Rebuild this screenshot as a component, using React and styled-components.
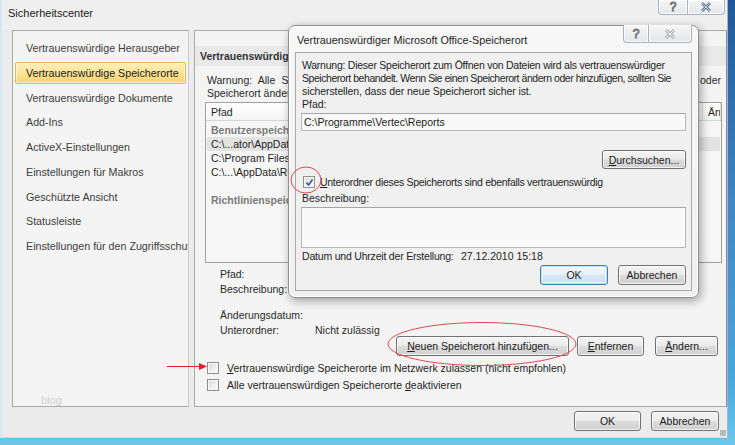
import React from "react";
import styled, { createGlobalStyle, css } from "styled-components";

const FONT = `"Liberation Sans", Arial, sans-serif`;

const Global = createGlobalStyle`
  html, body {
    margin: 0;
    padding: 0;
    background: #f0f0f0;
    font-family: ${FONT};
    font-size: 10.5px;
    color: #1e1e1e;
  }
  * { box-sizing: border-box; }
`;

const Frame = styled.div`
  position: relative;
  width: 735px;
  height: 445px;
  overflow: hidden;
  display: flex;
  padding: 0 7px 7px 0;
  background: linear-gradient(180deg, #1f5796 0%, #3f86c4 45%, #4aa6dc 85%, #6cc6ec 100%);
`;

const Window = styled.div`
  flex: 1;
  min-width: 0;
  overflow: hidden;
  display: flex;
  flex-direction: column;
  background: #ececec;
  border-left: 2px solid #d4e9f3;
  border-right: 1px solid #9fb6cc;
  border-bottom: 1px solid #c8dbe6;
`;

const TitleBar = styled.div`
  height: 30px;
  display: flex;
  justify-content: space-between;
  align-items: flex-start;
  padding-left: 6px;
  background: #efefef;
`;

const TitleText = styled.div`
  font-size: 11px;
  line-height: 26px;
  color: #1a1a1a;
`;

const Caption = styled.div`
  display: flex;
  margin-right: 2px;
`;

const CaptionButton = styled.div`
  width: ${(p) => p.$w}px;
  height: ${(p) => p.$h}px;
  display: flex;
  align-items: center;
  justify-content: center;
  border: 1px solid #a9b2bd;
  border-top: none;
  background: linear-gradient(#f6f6f6, #e4e6e9);
  box-shadow: inset 0 0 0 1px rgba(255, 255, 255, 0.8);
  color: #6f7f92;
  font-size: 11px;
  font-weight: bold;
  ${(p) => p.$first && css`border-bottom-left-radius: 4px;`}
  ${(p) => p.$last && css`border-bottom-right-radius: 4px; border-left: none;`}
`;

const Body = styled.div`
  height: 377px;
  display: flex;
  gap: 5px;
  padding-left: 10px;
  min-width: 0;
`;

const Nav = styled.div`
  width: 177px;
  flex: none;
  border: 1px solid #a8a8a8;
  border-right-color: #c9c9c9;
  background: #f4f4f4;
  padding: 6px 2px 0 2px;
  overflow: hidden;
`;

const NavItem = styled.div`
  height: 22px;
  margin-bottom: 2.75px;
  padding-left: 10px;
  line-height: 20px;
  font-size: 10.7px;
  white-space: nowrap;
  color: #3d3d3d;
  border: 1px solid transparent;
  border-radius: 2px;
  ${(p) =>
    p.$active &&
    css`
      color: #1c1c1c;
      border-color: #e2b958;
      background: linear-gradient(#fdf0b8 0%, #fbe49a 45%, #f6d36e 100%);
      box-shadow: inset 0 0 0 1px rgba(255, 250, 225, 0.7);
    `}
`;

const Watermark = styled.div`
  margin-top: 137px;
  padding-left: 26px;
  color: #d0d0d0;
  font-size: 11px;
`;

const Panel = styled.div`
  flex: 1;
  min-width: 0;
  border: 1px solid #a8a8a8;
  border-right-color: #8b8b8b;
  background: #f4f4f4;
  padding-top: 15px;
  display: flex;
  flex-direction: column;
  overflow: hidden;
`;

const PanelHeader = styled.div`
  height: 20px;
  line-height: 20px;
  padding-left: 5px;
  background: #e9e9e9;
  font-weight: bold;
  color: #333;
  white-space: nowrap;
`;

const Warn = styled.div`
  margin: 8px 5px 3px 12px;
  line-height: 12.5px;
  white-space: nowrap;
  overflow: hidden;
  color: #2a2a2a;
`;

const JustLine = styled.div`
  white-space: normal;
  height: 12.5px;
  overflow: hidden;
  text-align: justify;
  text-align-last: justify;
`;

const List = styled.div`
  margin: 0 4px 0 10px;
  height: 161px;
  flex: none;
  border: 1px solid #a0a0a0;
  background: #f6f6f6;
  overflow: hidden;
`;

const ListHead = styled.div`
  display: grid;
  grid-template-columns: 220px 277px 1fr;
  height: 18px;
  border-bottom: 1px solid #d5d5d5;
  background: linear-gradient(#ffffff, #f5f5f5);
`;

const HeadCell = styled.div`
  line-height: 18px;
  padding-left: 5px;
  border-right: 1px solid #e0e0e0;
  white-space: nowrap;
  overflow: hidden;
  color: #1e1e1e;
`;

const ListRow = styled.div`
  height: 14px;
  line-height: 14px;
  padding-left: 4px;
  margin: 0 1px;
  white-space: nowrap;
  color: ${(p) => (p.$group ? "#7a7a7a" : "#1e1e1e")};
  font-weight: ${(p) => (p.$group ? "bold" : "normal")};
  background: ${(p) => (p.$sel ? "#e3e3e3" : "transparent")};
  margin-top: ${(p) => p.$mt || 0}px;
`;

const Details = styled.div`
  padding: 4px 0 0 25px;
  display: grid;
  grid-template-columns: 95px 1fr;
  grid-template-rows: 15px 15px 11px 15px 15px;
  line-height: 15px;
  color: #2a2a2a;
`;

const Gap = styled.div`
  grid-column: 1 / 3;
`;

const ButtonRow = styled.div`
  display: flex;
  justify-content: flex-end;
  gap: ${(p) => p.$gap || 10}px;
  padding-right: ${(p) => p.$pr || 0}px;
  margin-top: ${(p) => p.$mt || 0}px;
`;

const Button = styled.div`
  width: ${(p) => p.$w}px;
  height: ${(p) => p.$h || 20}px;
  flex: none;
  display: flex;
  align-items: center;
  justify-content: center;
  border: 1px solid #707070;
  border-radius: 3px;
  background: linear-gradient(#f3f3f3 0%, #ebebeb 48%, #dddddd 52%, #cfcfcf 100%);
  box-shadow: inset 0 0 0 1px rgba(255, 255, 255, 0.75);
  color: #1a1a1a;
  white-space: nowrap;
  ${(p) =>
    p.$default &&
    css`
      border-color: #3c7fb1;
      background: linear-gradient(#f2f8fc 0%, #e6f1f9 48%, #d6e8f5 52%, #c8e0f2 100%);
      box-shadow: inset 0 0 0 1px #bfe4f8, inset 0 0 0 2px rgba(255, 255, 255, 0.6);
    `}
`;

const CheckRows = styled.div`
  margin-top: 6px;
  padding-left: 12px;
  display: flex;
  flex-direction: column;
  gap: 6px;
`;

const CheckLine = styled.div`
  display: flex;
  align-items: center;
  gap: ${(p) => p.$gap || 8}px;
  height: ${(p) => p.$h || 11}px;
  white-space: nowrap;
  color: #1e1e1e;
  letter-spacing: ${(p) => p.$ls || 0}px;
`;

const Box = styled.span`
  width: 12px;
  height: 12px;
  flex: none;
  display: flex;
  align-items: center;
  justify-content: center;
  border: 1px solid #8f8f8f;
  background: linear-gradient(135deg, #d9d9d9 0%, #f0f0f0 60%, #fbfbfb 100%);
  box-shadow: inset 0 0 0 1px #f7f7f7;
`;

const Footer = styled.div`
  flex: 1;
  display: flex;
  justify-content: flex-end;
  align-items: flex-start;
  gap: 10px;
  padding: 4px 8px 0 0;
`;

const Grip = styled.div`
  position: absolute;
  right: 9px;
  bottom: 9px;
  width: 6px;
  height: 6px;
  background-image: radial-gradient(#b9b9b9 0.8px, transparent 1px);
  background-size: 2px 2px;
`;

/* overlapping dialog */
const Dialog = styled.div`
  position: absolute;
  left: 288px;
  top: 25px;
  width: 411px;
  height: 273px;
  padding: 0 6px 6px 6px;
  display: flex;
  flex-direction: column;
  border: 1px solid #8d8d8d;
  border-radius: 7px;
  background: linear-gradient(#f7f7f7, #efefef);
  box-shadow: inset 0 0 0 1px rgba(255, 255, 255, 0.9), 2px 3px 10px rgba(0, 0, 0, 0.35);
`;

const DialogTitleBar = styled.div`
  height: 26px;
  display: flex;
  justify-content: space-between;
  align-items: flex-start;
`;

const DialogTitle = styled.div`
  font-size: 10.8px;
  line-height: 28px;
  padding-left: 2px;
  color: #1e1e1e;
`;

const DialogCaption = styled.div`
  display: flex;
  margin-top: -1px;
`;

const DialogBody = styled.div`
  flex: 1;
  border: 1px solid #a9a9a9;
  background: #f0f0f0;
  padding: 6px 5px 0 5px;
  display: flex;
  flex-direction: column;
`;

const DText = styled.div`
  padding-left: 1px;
  line-height: 13px;
  white-space: nowrap;
  color: #1e1e1e;
  letter-spacing: ${(p) => p.$ls || 0}px;
`;

const Input = styled.div`
  margin-top: 2px;
  height: ${(p) => p.$h}px;
  border: 1px solid #b5b8bd;
  border-top-color: #a3a6ab;
  background: #f9f9f9;
  padding-left: 2px;
  line-height: 16px;
  color: #222;
`;

const DateLabel = styled.span`
  width: 159px;
  flex: none;
  letter-spacing: -0.2px;
`;

const Annotations = styled.svg`
  position: absolute;
  left: 0;
  top: 0;
  pointer-events: none;
`;

const CheckMark = () => (
  <svg width="9" height="9" viewBox="0 0 9 9">
    <path d="M1.5 4.6 L3.6 7 L7.6 1.4" fill="none" stroke="#3e58a4" strokeWidth="1.7" />
  </svg>
);

const BigX = () => (
  <svg width="12" height="10" viewBox="0 0 12 10">
    <path d="M2 1 L10 9 M10 1 L2 9" stroke="#5e7490" strokeWidth="2.6" />
    <path d="M2 1 L10 9 M10 1 L2 9" stroke="#e6edf5" strokeWidth="0.8" />
  </svg>
);

const HollowX = () => (
  <svg width="12" height="10" viewBox="0 0 12 10">
    <path d="M2 1 L10 9 M10 1 L2 9" stroke="#8a8a8a" strokeWidth="2.8" />
    <path d="M2 1 L10 9 M10 1 L2 9" stroke="#f4f4f4" strokeWidth="1.2" />
  </svg>
);

const HelpGlyph = styled.span`
  font-size: 12px;
  font-weight: normal;
  color: #f7f7f7;
  -webkit-text-stroke: 0.9px #6f6f6f;
`;

const navItems = [
  "Vertrauenswürdige Herausgeber",
  "Vertrauenswürdige Speicherorte",
  "Vertrauenswürdige Dokumente",
  "Add-Ins",
  "ActiveX-Einstellungen",
  "Einstellungen für Makros",
  "Geschützte Ansicht",
  "Statusleiste",
  "Einstellungen für den Zugriffsschutz",
];

export default function App() {
  return (
    <>
      <Global />
      <Frame>
        <Window>
          <TitleBar>
            <TitleText>Sicherheitscenter</TitleText>
            <Caption>
              <CaptionButton $w={30} $h={15} $first>
                <HelpGlyph>?</HelpGlyph>
              </CaptionButton>
              <CaptionButton $w={37} $h={15} $last>
                <BigX />
              </CaptionButton>
            </Caption>
          </TitleBar>

          <Body>
            <Nav>
              {navItems.map((item, i) => (
                <NavItem key={item} $active={i === 1}>
                  {item}
                </NavItem>
              ))}
              <Watermark>blog</Watermark>
            </Nav>

            <Panel>
              <PanelHeader>Vertrauenswürdige Speicherorte</PanelHeader>
              <Warn>
                <JustLine>
                  Warnung: Alle Speicherorte gelten als vertrauenswürdige Quellen zum Öffnen von Dateien. Neue oder
                </JustLine>
                <div>Speicherort ändern oder hinzufügen, sollten Sie sicherstellen, dass der neue Speicherort sicher ist.</div>
              </Warn>
              <List>
                <ListHead>
                  <HeadCell>Pfad</HeadCell>
                  <HeadCell>Beschreibung</HeadCell>
                  <HeadCell>Änderungsdatum</HeadCell>
                </ListHead>
                <ListRow $group $mt={2}>Benutzerspeicherorte</ListRow>
                <ListRow $sel>C:\...ator\AppData\Roaming\Microsoft\Templates\</ListRow>
                <ListRow>C:\Program Files\Microsoft Office\Templates\</ListRow>
                <ListRow>C:\...\AppData\Roaming\Microsoft\Word\Startup\</ListRow>
                <ListRow $group $mt={14}>Richtlinienspeicherorte</ListRow>
              </List>

              <Details>
                <span>Pfad:</span>
                <span />
                <span>Beschreibung:</span>
                <span />
                <Gap />
                <span>Änderungsdatum:</span>
                <span />
                <span>Unterordner:</span>
                <span>Nicht zulässig</span>
              </Details>

              <ButtonRow $gap={8} $pr={8} $mt={-2}>
                <Button $w={173}>
                  <u>N</u>euen Speicherort hinzufügen...
                </Button>
                <Button $w={67} style={{ marginRight: 3 }}>
                  <u>E</u>ntfernen
                </Button>
                <Button $w={63}>
                  <u>Ä</u>ndern...
                </Button>
              </ButtonRow>

              <CheckRows>
                <CheckLine>
                  <Box />
                  <span>
                    <u>V</u>ertrauenswürdige Speicherorte im Netzwerk zulassen (nicht empfohlen)
                  </span>
                </CheckLine>
                <CheckLine>
                  <Box />
                  <span>
                    Alle vertrauenswürdigen Speicherorte <u>d</u>eaktivieren
                  </span>
                </CheckLine>
              </CheckRows>
            </Panel>
          </Body>

          <Footer>
            <Button $w={67}>OK</Button>
            <Button $w={68}>Abbrechen</Button>
          </Footer>
        </Window>
        <Grip />

        <Dialog>
          <DialogTitleBar>
            <DialogTitle>Vertrauenswürdiger Microsoft Office-Speicherort</DialogTitle>
            <DialogCaption>
              <CaptionButton $w={26} $h={18} $first>
                <HelpGlyph>?</HelpGlyph>
              </CaptionButton>
              <CaptionButton $w={43} $h={18} $last>
                <HollowX />
              </CaptionButton>
            </DialogCaption>
          </DialogTitleBar>
          <DialogBody>
            <DText $ls={-0.25}>Warnung: Dieser Speicherort zum Öffnen von Dateien wird als vertrauenswürdiger</DText>
            <DText $ls={-0.45}>Speicherort behandelt. Wenn Sie einen Speicherort ändern oder hinzufügen, sollten Sie</DText>
            <DText $ls={-0.1}>sicherstellen, dass der neue Speicherort sicher ist.</DText>
            <DText>Pfad:</DText>
            <Input $h={18}>C:\Programme\Vertec\Reports</Input>
            <ButtonRow $mt={19}>
              <Button $w={84} $h={19}>
                <u>D</u>urchsuchen...
              </Button>
            </ButtonRow>
            <CheckLine $h={14} $gap={5} $ls={-0.3} style={{ marginTop: 6, paddingLeft: 2 }}>
              <Box>
                <CheckMark />
              </Box>
              <span>
                <u>U</u>nterordner dieses Speicherorts sind ebenfalls vertrauenswürdig
              </span>
            </CheckLine>
            <DText style={{ marginTop: 3 }}>Beschreibung:</DText>
            <Input $h={41} />
            <DText style={{ marginTop: 2, display: "flex" }}>
              <DateLabel>Datum und Uhrzeit der Erstellung:</DateLabel>
              <span>27.12.2010 15:18</span>
            </DText>
            <ButtonRow $gap={10} $mt={2}>
              <Button $w={68} $h={20} $default>
                OK
              </Button>
              <Button $w={68} $h={20}>
                Abbrechen
              </Button>
            </ButtonRow>
          </DialogBody>
        </Dialog>

        <Annotations width="735" height="445" viewBox="0 0 735 445">
          <ellipse cx="306" cy="180" rx="15" ry="13" fill="none" stroke="#e0484a" strokeWidth="1" />
          <ellipse cx="482" cy="344" rx="94" ry="21.5" fill="none" stroke="#e0484a" strokeWidth="1" />
          <line x1="167" y1="366.5" x2="200" y2="366.5" stroke="#e02020" strokeWidth="1.2" />
          <polygon points="199,363 207,366.5 199,370" fill="#e02020" />
        </Annotations>
      </Frame>
    </>
  );
}
